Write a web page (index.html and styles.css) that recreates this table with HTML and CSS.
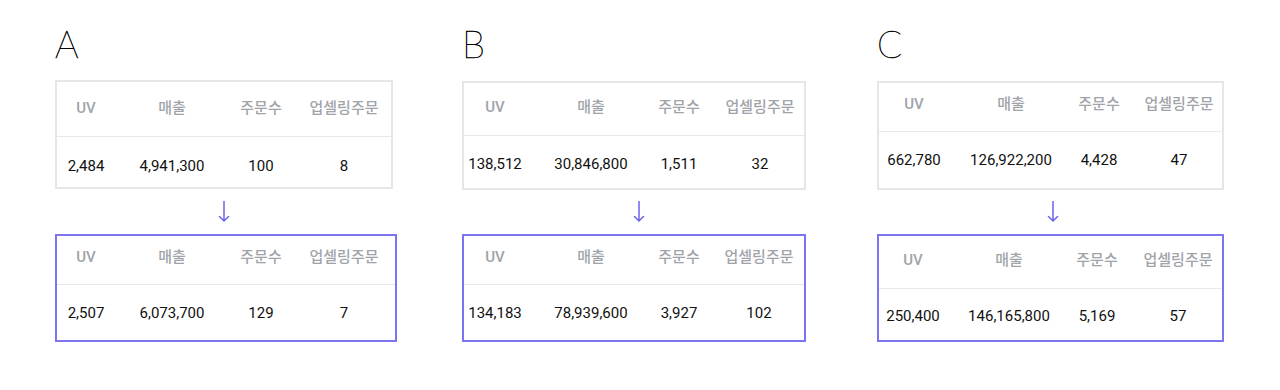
FILE: index.html
```html
<!DOCTYPE html>
<html lang="ko">
<head>
<meta charset="utf-8">
<title>UV 매출 비교</title>
<link rel="stylesheet" href="styles.css">
</head>
<body>
<main class="board">
  <section class="panel panel-a">
    <h2 class="label">A</h2>
    <div class="stat stat-a1">
      <div class="th">UV</div><div class="th">매출</div><div class="th">주문수</div><div class="th c4">업셀링주문</div>
      <div class="td">2,484</div><div class="td">4,941,300</div><div class="td">100</div><div class="td c4">8</div>
    </div>
    <div class="arrow"><svg viewBox="0 0 12 21" width="12" height="21"><path d="M6 0V20M1.5 15.5L6 20L10.5 15.5"/></svg></div>
    <div class="stat after stat-a2">
      <div class="th">UV</div><div class="th">매출</div><div class="th">주문수</div><div class="th c4">업셀링주문</div>
      <div class="td">2,507</div><div class="td">6,073,700</div><div class="td">129</div><div class="td c4">7</div>
    </div>
  </section>
  <section class="panel panel-b">
    <h2 class="label">B</h2>
    <div class="stat stat-b1">
      <div class="th">UV</div><div class="th">매출</div><div class="th">주문수</div><div class="th c4">업셀링주문</div>
      <div class="td">138,512</div><div class="td">30,846,800</div><div class="td">1,511</div><div class="td c4">32</div>
    </div>
    <div class="arrow"><svg viewBox="0 0 12 21" width="12" height="21"><path d="M6 0V20M1.5 15.5L6 20L10.5 15.5"/></svg></div>
    <div class="stat after stat-b2">
      <div class="th">UV</div><div class="th">매출</div><div class="th">주문수</div><div class="th c4">업셀링주문</div>
      <div class="td">134,183</div><div class="td">78,939,600</div><div class="td">3,927</div><div class="td c4">102</div>
    </div>
  </section>
  <section class="panel panel-c">
    <h2 class="label">C</h2>
    <div class="stat stat-c1">
      <div class="th">UV</div><div class="th">매출</div><div class="th">주문수</div><div class="th c4">업셀링주문</div>
      <div class="td">662,780</div><div class="td">126,922,200</div><div class="td">4,428</div><div class="td c4">47</div>
    </div>
    <div class="arrow"><svg viewBox="0 0 12 21" width="12" height="21"><path d="M6 0V20M1.5 15.5L6 20L10.5 15.5"/></svg></div>
    <div class="stat after stat-c2">
      <div class="th">UV</div><div class="th">매출</div><div class="th">주문수</div><div class="th c4">업셀링주문</div>
      <div class="td">250,400</div><div class="td">146,165,800</div><div class="td">5,169</div><div class="td c4">57</div>
    </div>
  </section>
</main>
</body>
</html>
```

FILE: styles.css
```css
html, body {
  margin: 0;
  padding: 0;
  background: #ffffff;
}

body {
  font-family: Roboto, "Noto Sans CJK KR", sans-serif;
  color: #111111;
}

.board {
  display: flex;
  align-items: flex-start;
  padding-left: 55px;
}

.panel {
  display: flex;
  flex-direction: column;
  padding-top: 21px;
  box-sizing: border-box;
}

.panel-a { width: 407px; --tmt: 15px; --apt: 12px; --ax: 163px; }
.panel-b { width: 415px; --tmt: 16px; --apt: 11px; --ax: 171px; }
.panel-c { width: 347px; --tmt: 16px; --apt: 11px; --ax: 170px; }

.label {
  margin: 0;
  height: 44px;
  font-family: Lato, "Open Sans", sans-serif;
  font-weight: 100;
  font-size: 37px;
  line-height: normal;
  color: #000000;
  -webkit-text-stroke: 0.55px #000000;
}

.stat {
  display: grid;
  box-sizing: border-box;
  border: 2px solid #e6e6e6;
  margin-top: var(--tmt);
  grid-template-columns: var(--cols);
}

.stat.after {
  margin-top: 0;
  border-color: #7c74f0;
}

.th, .td {
  text-align: center;
  line-height: 20px;
  white-space: nowrap;
}

.th {
  font-size: 15px;
  font-weight: 500;
  color: #a0a4a9;
  padding-top: var(--pt1);
  padding-bottom: var(--pb1);
  border-bottom: 1px solid #e9e9e9;
}

.td {
  font-size: 15px;
  font-weight: 400;
  color: #111111;
  padding-top: var(--pt2);
  padding-bottom: var(--pb2);
}

.c4 {
  padding-left: var(--pl4);
}

.stat-a1 { width: 338px; --cols: 58px 114px 64px 1fr; --pl4: 4px;  --pt1: 16px; --pb1: 18px; --pt2: 19px; --pb2: 11px; }
.stat-a2 { width: 342px; --cols: 58px 114px 64px 1fr; --pl4: 0px;  --pt1: 11px; --pb1: 17px; --pt2: 18px; --pb2: 17px; }
.stat-b1 { width: 344px; --cols: 62px 130px 46px 1fr; --pl4: 14px; --pt1: 14px; --pb1: 18px; --pt2: 18px; --pb2: 14px; }
.stat-b2 { width: 344px; --cols: 62px 130px 46px 1fr; --pl4: 12px; --pt1: 11px; --pb1: 17px; --pt2: 18px; --pb2: 17px; }
.stat-c1 { width: 347px; --cols: 70px 124px 52px 1fr; --pl4: 11px; --pt1: 11px; --pb1: 17px; --pt2: 18px; --pb2: 18px; }
.stat-c2 { width: 347px; --cols: 68px 124px 52px 1fr; --pl4: 11px; --pt1: 14px; --pb1: 18px; --pt2: 17px; --pb2: 14px; }

.arrow {
  display: flex;
  padding: var(--apt) 0 12px var(--ax);
}

.arrow svg {
  display: block;
  fill: none;
  stroke: #6c64ea;
  stroke-width: 1.5;
  stroke-linecap: round;
  stroke-linejoin: round;
}
```
